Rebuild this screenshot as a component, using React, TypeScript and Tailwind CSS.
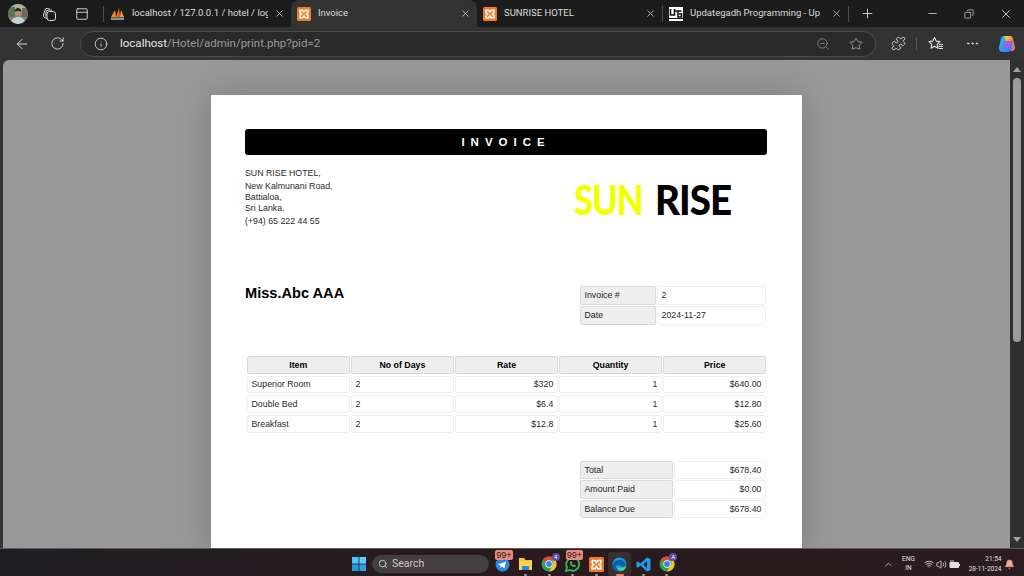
import React from "react";
import { ArrowLeft, RotateCw, Info, ZoomOut, Star, X, Plus, Minus, MoreHorizontal, Search, ChevronUp, Wifi, Volume2, Bell, Puzzle, Copy, PanelTop } from "lucide-react";

const sans = "font-['Liberation_Sans',Arial,sans-serif]";

function Xampp({ size = 14 }: { size?: number }) {
  return (
    <svg width={size} height={size} viewBox="0 0 14 14" className="shrink-0">
      <rect width="14" height="14" rx="1.5" fill="#f07b22" />
      <path d="M3 3.2h2.6L7 5l1.4-1.8H11v2.4L9.3 7 11 8.4v2.4H8.4L7 9l-1.4 1.8H3V8.4L4.7 7 3 5.6z" fill="none" stroke="#fff" strokeWidth="1.5" />
    </svg>
  );
}

function Pma() {
  return (
    <svg width="15" height="14" viewBox="0 0 15 14" className="shrink-0">
      <path d="M1 10 L5 3 L6 10z" fill="#f29111" />
      <path d="M6 10 L9 1 L10 10z" fill="#e8730c" />
      <path d="M10 10 L11 3 L14 10z" fill="#f6a623" />
      <rect x="1" y="10.5" width="13" height="2.5" fill="#8a8f9c" />
    </svg>
  );
}

function Ug() {
  return (
    <svg width="14" height="14" viewBox="0 0 14 14" className="shrink-0">
      <rect width="14" height="14" fill="#fff" />
      <path d="M1.500 2v6h4V2M5.500 4h7M9 4v6h3.500V7H10" fill="none" stroke="#111" strokeWidth="1.6" />
      <rect y="11" width="14" height="1" fill="#111" />
    </svg>
  );
}

function Avatar() {
  return (
    <svg width="20" height="20" viewBox="0 0 20 20" className="ml-[8px] shrink-0">
      <defs>
        <clipPath id="avc"><circle cx="10" cy="10" r="10" /></clipPath>
      </defs>
      <g clipPath="url(#avc)">
        <rect width="20" height="20" fill="#7d8a6e" />
        <rect width="20" height="7" fill="#a9b4a0" />
        <rect x="0" y="3" width="7" height="10" fill="#5f7350" />
        <rect x="14" y="4" width="6" height="9" fill="#6d6a55" />
        <path d="M3 20c0-5 3-7 7-7s7 2 7 7z" fill="#c7d0d8" />
        <circle cx="10" cy="8.500" r="3.500" fill="#b48d72" />
        <path d="M6.500 8c0-3 2-4 3.500-4s3.500 1 3.500 4c-1-1.500-6-1.500-7 0z" fill="#2c2622" />
      </g>
    </svg>
  );
}

function Collections() {
  return (
    <svg width="14" height="14" viewBox="0 0 14 14" fill="none" stroke="#dcdcdc" strokeWidth="1" className="ml-[13.500px] shrink-0">
      <rect x="5" y="4.500" width="8.500" height="9" rx="2.500" />
      <path d="M5 11.500 L2.800 10.500 A2 2 0 0 1 1.500 8 L3 3 A2 2 0 0 1 5.500 1.500 L8 2.300" />
      <path d="M3.800 9.500 L4 5 A2.500 2.500 0 0 1 6.500 3 L10 3.200" />
    </svg>
  );
}

function Tab({ icon, title, active, w, divider }: { icon: React.ReactNode; title: string; active?: boolean; w: string; divider?: boolean }) {
  return (
    <div className={`${w} h-[27px] flex items-center shrink-0 relative ${active ? "bg-[#333333] rounded-t-lg" : ""}`}>
      <div className="ml-[6px] mr-[7px] flex items-center">{icon}</div>
      <span className="flex-1 overflow-hidden whitespace-nowrap text-[9.500px] text-[#dcdcdc] font-['Roboto',sans-serif]">{title}</span>
      <X size={11} strokeWidth={1.5} className="text-[#e2e2e2] mx-[6px] shrink-0" />
      {divider && <span className="w-px h-[16px] bg-[#4d4d4d] shrink-0" />}
    </div>
  );
}

function TabBar() {
  return (
    <div className="h-[27px] bg-[#1c1c1c] flex items-center shrink-0">
      <Avatar />
      <Collections />
      <PanelTop size={14} strokeWidth={1.5} className="text-[#dcdcdc] ml-[19.500px] shrink-0" />
      <span className="w-px h-[16px] bg-[#4d4d4d] ml-[14px] shrink-0" />
      <Tab w="w-[187px]" icon={<Pma />} title="localhost / 127.0.0.1 / hotel / log" />
      <Tab w="w-[186px]" active icon={<Xampp />} title="Invoice" />
      <Tab w="w-[186px]" icon={<Xampp />} title="SUNRISE HOTEL" divider />
      <Tab w="w-[186px]" icon={<Ug />} title="Updategadh Programming - Up" divider />
      <Plus size={15} strokeWidth={1.4} className="text-[#dcdcdc] ml-[11px] shrink-0" />
      <div className="flex-1" />
      <Minus size={13} strokeWidth={1.3} className="text-[#e6e6e6] shrink-0" />
      <Copy size={10} strokeWidth={1.5} className="text-[#e6e6e6] ml-[25px] -scale-x-100 shrink-0" />
      <X size={14} strokeWidth={1.4} className="text-[#e6e6e6] ml-[25px] mr-[11px] shrink-0" />
    </div>
  );
}

function Copilot() {
  return (
    <svg width="18" height="18" viewBox="0 0 18 18" className="shrink-0">
      <defs>
        <linearGradient id="cpa" x1="0" y1="0" x2="1" y2="1">
          <stop offset="0" stopColor="#29c3f5" />
          <stop offset="1" stopColor="#3b6fe8" />
        </linearGradient>
        <linearGradient id="cpb" x1="0" y1="0" x2="1" y2="1">
          <stop offset="0" stopColor="#f5e03a" />
          <stop offset="0.5" stopColor="#f08a3c" />
          <stop offset="1" stopColor="#ef5fa7" />
        </linearGradient>
      </defs>
      <path d="M6 1h6c2 0 2.500 1 3 3l2 8c.5 2-1 4-3 4H9z" fill="url(#cpb)" />
      <path d="M6 1C4 1 3.500 2 3 4L1 12c-.5 2 1 5 3 5h6c2 0 3-1 3.500-3L15 6H8z" fill="url(#cpa)" />
      <path d="M5 12l2-6h7l-2 6z" fill="#b154e8" />
    </svg>
  );
}

function Favorites() {
  return (
    <svg width="16" height="15" viewBox="0 0 16 15" fill="none" stroke="#e2e2e2" strokeWidth="1.100" className="ml-[11px] shrink-0">
      <path d="M6.500 1.500l1.700 3.600 3.800.5-2.800 2.700.7 3.900-3.400-1.900-3.400 1.900.7-3.900L1 5.600l3.800-.5z" strokeLinejoin="round" />
      <path d="M11 8.500h4M10.500 10.500h4.500M10.500 12.500h4.500" />
    </svg>
  );
}

function ToolBar() {
  return (
    <div className="h-[33px] bg-[#333333] flex items-center shrink-0">
      <ArrowLeft size={16} strokeWidth={1.4} className="text-[#e2e2e2] ml-[14px] shrink-0" />
      <RotateCw size={15} strokeWidth={1.4} className="text-[#e2e2e2] ml-[20px] shrink-0" />
      <div className="w-[796px] h-[26px] ml-[15px] rounded-full bg-[#2a2a2a] border border-[#4b4b4b] flex items-center shrink-0">
        <Info size={14} strokeWidth={1.4} className="text-[#e2e2e2] ml-[13px] shrink-0" />
        <span className="ml-[12px] text-[11.500px] text-[#9a9a9a] font-['Roboto',sans-serif] whitespace-nowrap">
          <span className="text-[#e8e8e8]">localhost</span>/Hotel/admin/print.php?pid=2
        </span>
        <div className="flex-1" />
        <ZoomOut size={14} strokeWidth={1.4} className="text-[#8e8e8e] shrink-0" />
        <Star size={14} strokeWidth={1.3} className="text-[#b5b5b5] ml-[19px] mr-[12px] shrink-0" />
      </div>
      <Puzzle size={15} strokeWidth={1.4} className="text-[#e2e2e2] ml-[15px] shrink-0" />
      <span className="w-px h-[13px] bg-[#555555] ml-[10px] shrink-0" />
      <Favorites />
      <MoreHorizontal size={15} strokeWidth={1.6} className="text-[#e2e2e2] ml-[21px] shrink-0" />
      <div className="ml-[18px]"><Copilot /></div>
    </div>
  );
}

function Cell({ children, head, right, center, className = "" }: { children: React.ReactNode; head?: boolean; right?: boolean; center?: boolean; className?: string }) {
  return (
    <div className={`flex items-center px-[3.500px] pt-[1px] rounded-[2px] border text-[8.800px] min-w-0 ${head ? "bg-[#eeeeee] border-[#d9d9d9] text-[#222222]" : "bg-white border-[#efefef] text-[#2a2a2a]"} ${right ? "justify-end" : ""} ${center ? "justify-center" : ""} ${className}`}>
      {children}
    </div>
  );
}

const items = [
  ["Superior Room", "2", "$320", "1", "$640.00"],
  ["Double Bed", "2", "$6.4", "1", "$12.80"],
  ["Breakfast", "2", "$12.8", "1", "$25.60"],
];

function Invoice() {
  return (
    <div className={`w-[591px] h-[460px] bg-white shrink-0 mt-[35px] pt-[34px] pl-[34px] pr-[35px] overflow-hidden shadow-[0_0_36px_rgba(0,0,0,0.2)] ${sans}`}>
      <div className="h-[26px] pt-[1px] bg-black rounded-[3px] flex items-center justify-center text-white text-[11.500px] font-bold tracking-[0.52em]">INVOICE</div>

      <div className="flex h-[129px]">
        <div className="pt-[11.500px] text-[8.800px] text-[#2a2a2a]">
          <p className="h-[13px] leading-[13px]">SUN RISE HOTEL,</p>
          <p className="h-[12px] leading-[12px]">New Kalmunani Road,</p>
          <p className="h-[11px] leading-[11px]">Battialoa,</p>
          <p className="h-[12px] leading-[11px]">Sri Lanka.</p>
          <p className="h-[12px] leading-[12px]">(+94) 65 222 44 55</p>
        </div>
        <div className="flex-1" />
        <div className="w-[193px] pt-[21px] flex font-['Lato',sans-serif] font-black text-[41px] leading-[48px] whitespace-nowrap">
          <span className="w-[81px] shrink-0 inline-block origin-left scale-x-[0.85] text-[#f4ff00] tracking-[-1.500px]">SUN</span>
          <span className="inline-block origin-left scale-x-[0.94] text-black tracking-[-1px]">RISE</span>
        </div>
      </div>

      <div className="flex items-start h-[71px]">
        <h1 className="text-[14.600px] font-bold text-black leading-[18px]">Miss.Abc AAA</h1>
        <div className="flex-1" />
        <div className="grid grid-cols-[76px_109px] grid-rows-[18.500px_18.500px] gap-x-[1px] gap-y-[1.500px] mt-[2px] mr-[1px]">
          <Cell head>Invoice #</Cell>
          <Cell>2</Cell>
          <Cell head>Date</Cell>
          <Cell>2024-11-27</Cell>
        </div>
      </div>

      <div className="grid grid-cols-5 auto-rows-[17.800px] gap-x-[1.500px] gap-y-[1.900px] ml-[2px] mr-[1px] mt-[1px]">
        {["Item", "No of Days", "Rate", "Quantity", "Price"].map((h) => (
          <Cell head center key={h} className="font-bold text-black">{h}</Cell>
        ))}
        {items.map((row) =>
          row.map((c, i) => (
            <Cell key={row[0] + i} right={i >= 2}>{c}</Cell>
          ))
        )}
      </div>

      <div className="flex justify-end mt-[28px] mr-[1px]">
        <div className="grid grid-cols-[93px_92px] auto-rows-[18.200px] gap-x-[1px] gap-y-[1.300px]">
          <Cell head>Total</Cell>
          <Cell right>$678.40</Cell>
          <Cell head>Amount Paid</Cell>
          <Cell right>$0.00</Cell>
          <Cell head>Balance Due</Cell>
          <Cell right>$678.40</Cell>
        </div>
      </div>
    </div>
  );
}

function Win() {
  return (
    <svg width="14" height="14" viewBox="0 0 14 14" className="shrink-0">
      <rect width="6.600" height="6.600" fill="#4cc2ff" />
      <rect x="7.400" width="6.600" height="6.600" fill="#5ecbff" />
      <rect y="7.400" width="6.600" height="6.600" fill="#1f9be0" />
      <rect x="7.400" y="7.400" width="6.600" height="6.600" fill="#2aa6e8" />
    </svg>
  );
}

function Chrome() {
  return (
    <svg width="16" height="16" viewBox="0 0 16 16" className="shrink-0">
      <circle cx="8" cy="8" r="7.500" fill="#2ea44f" />
      <path d="M8 .5a7.500 7.500 0 0 1 6.500 3.750H8a3.800 3.800 0 0 0-3.400 2.100L2 3.100A7.500 7.500 0 0 1 8 .5z" fill="#e8453c" />
      <path d="M14.500 4.250A7.500 7.500 0 0 1 8 15.500l3.200-5.500a3.800 3.800 0 0 0 0-5.750z" fill="#f9c02d" />
      <circle cx="8" cy="8" r="3.700" fill="#fff" />
      <circle cx="8" cy="8" r="2.900" fill="#3c7ff0" />
    </svg>
  );
}

function Slot({ children, dot, accent, badge, num, active }: { children: React.ReactNode; dot?: boolean; accent?: boolean; badge?: string; num?: string; active?: boolean }) {
  return (
    <div className={`relative w-[23.500px] h-[24px] flex items-center justify-center rounded shrink-0 ${active ? "bg-[#3a2f30]" : ""}`}>
      {children}
      {badge && (
        <span className={`absolute -top-[2px] left-[5px] h-[10px] px-[1px] rounded-[2px] bg-[#ee8a7d] text-[9px] leading-[10px] text-[#222222] ${sans}`}>{badge}</span>
      )}
      {num && (
        <span className="absolute top-[1px] right-[1px] w-[8px] h-[8px] rounded-full bg-[#5d4ab0] text-[6px] leading-[8px] text-center text-white">{num}</span>
      )}
      {dot && <span className="absolute bottom-[0px] w-[3px] h-[2px] rounded-full bg-[#9a9a9a]" />}
      {accent && <span className="absolute bottom-[0px] w-[8px] h-[2px] rounded-full bg-[#f0816f]" />}
    </div>
  );
}

function Battery() {
  return (
    <svg width="11" height="11" viewBox="0 0 11 11" className="ml-[2px] shrink-0">
      <rect x="0.500" y="3" width="9.500" height="6" rx="1" fill="#e0e0e0" />
      <rect x="10" y="5" width="1" height="2" fill="#e0e0e0" />
      <path d="M2 3V1M4 3V1" stroke="#e0e0e0" strokeWidth="0.900" />
    </svg>
  );
}

function TaskBar() {
  return (
    <div className="h-[28px] pt-[3px] shrink-0 bg-gradient-to-r from-[#1f1f23] via-[#2a1a1e] to-[#2a1c20] border-t border-[#5a5a5a] flex items-center relative font-['Roboto',sans-serif]">
      <div className="ml-[352px] shrink-0"><Win /></div>
      <div className="w-[117px] h-[18px] ml-[6px] rounded-full bg-[#453e40] flex items-center shrink-0">
        <Search size={10} strokeWidth={2} className="text-[#d5d5d5] ml-[6px]" />
        <span className="ml-[4px] text-[10.500px] text-[#c8c8c8]">Search</span>
      </div>
      <div className="flex items-center ml-[1.250px]">
        <Slot badge="99+">
          <svg width="15" height="15" viewBox="0 0 15 15"><circle cx="7.500" cy="7.500" r="7" fill="#2a8ae0" /><path d="M3 7.500l8-3-1.500 7-2.500-2-1.500 1.500v-2.500z" fill="#fff" /></svg>
        </Slot>
        <Slot dot>
          <svg width="15" height="14" viewBox="0 0 15 14"><path d="M1 1h5l1.500 2H14v3H1z" fill="#f5c536" /><rect x="1" y="4" width="13" height="9" fill="#fad24c" /><rect x="4" y="9" width="7" height="4" fill="#2a8ae0" /></svg>
        </Slot>
        <Slot num="4" dot><Chrome /></Slot>
        <Slot badge="99+" dot>
          <svg width="15" height="15" viewBox="0 0 15 15"><path d="M1 14l1-3.800A6.500 6.500 0 1 1 4.800 13z" fill="none" stroke="#2dbd5a" strokeWidth="1.800" /><path d="M5 5c0 3 2 5 5 5l1-1.500-2-1-.8.700-1.500-1.500.7-.8-1-2z" fill="#2dbd5a" /></svg>
        </Slot>
        <Slot dot><Xampp size={15} /></Slot>
        <Slot active accent>
          <svg width="15" height="15" viewBox="0 0 15 15"><circle cx="7.500" cy="7.500" r="7" fill="#1a9fd8" /><path d="M1 9C1 5 4 3 7.500 3 11 3 14 5 14 8c0 1.500-1.500 2-3 2-1 0-2-.5-2-1.500H4C4 11 6 14 9 14c-4 1.500-8-1-8-5z" fill="#0f5fa8" /><path d="M5 11c1 2 3 3.500 6 2.500 2-1 3-3 3-5-1 1.500-3 2-4.500 2z" fill="#46d68a" /></svg>
        </Slot>
        <Slot dot>
          <svg width="15" height="15" viewBox="0 0 15 15"><path d="M11 0.500L14.500 2v11L11 14.500 4.500 8.500 1.800 10.800.5 10V5l1.300-.8L4.500 6.500zM11 4L7.300 7.500 11 11z" fill="#1f9cf0" /></svg>
        </Slot>
        <Slot num="A" dot><Chrome /></Slot>
      </div>
      <div className="flex-1" />
      <ChevronUp size={11} strokeWidth={1.6} className="text-[#e0e0e0] shrink-0" />
      <div className="ml-[7.500px] w-[14px] text-center text-[6.500px] leading-[9px] text-[#e0e0e0] shrink-0">ENG<br />IN</div>
      <Wifi size={10} strokeWidth={2} className="text-[#e0e0e0] ml-[8px] shrink-0" />
      <Volume2 size={11} strokeWidth={1.8} className="text-[#e0e0e0] ml-[2.500px] shrink-0" />
      <Battery />
      <div className="ml-[6.500px] w-[35px] text-right text-[6.500px] leading-[10px] text-[#e0e0e0] shrink-0 whitespace-nowrap">21:54<br />28-11-2024</div>
      <Bell size={11} fill="#f4a98c" strokeWidth={1} className="text-[#f4a98c] ml-[2px] mr-[9.500px] shrink-0" />
    </div>
  );
}

function ScrollBar() {
  return (
    <div className="w-[14px] bg-[#303030] shrink-0 flex flex-col items-center pt-[7px]">
      <span className="w-0 h-0 border-l-[4px] border-r-[4px] border-b-[5px] border-l-transparent border-r-transparent border-b-[#a0a0a0]" />
      <div className="w-[8px] h-[264px] mt-[6px] rounded-full bg-[#9b9b9b]" />
      <div className="flex-1" />
      <span className="w-0 h-0 mb-[6px] border-l-[4px] border-r-[4px] border-t-[5px] border-l-transparent border-r-transparent border-t-[#a0a0a0]" />
    </div>
  );
}

export default function App() {
  return (
    <div className="w-[1024px] h-[576px] flex flex-col overflow-hidden bg-[#333333]">
      <TabBar />
      <ToolBar />
      <div className="flex-1 flex min-h-0 pl-[3px]">
        <div className="flex-1 bg-[#999999] rounded-tl-[6px] flex justify-center min-w-0 overflow-hidden">
          <Invoice />
        </div>
        <ScrollBar />
      </div>
      <TaskBar />
    </div>
  );
}
